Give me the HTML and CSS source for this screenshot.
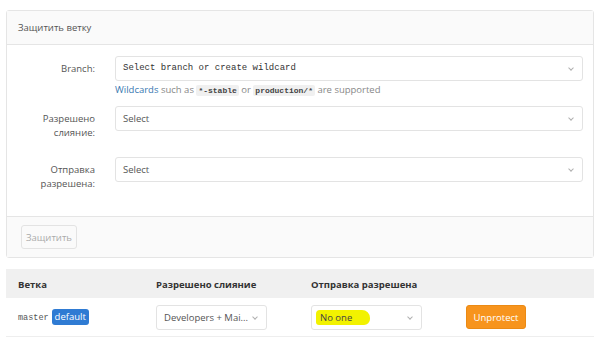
FILE: index.html
```html
<!DOCTYPE html>
<html lang="ru">
<head>
    <meta charset="UTF-8">
    <title>Защитить ветку</title>
    <link rel="stylesheet" href="styles.css">
</head>
<body>

    <div class="panel">
        <div class="panel-heading">Защитить ветку</div>

        <div class="panel-body">
            <div class="form-group first">
                <label class="form-label">Branch:</label>
                <div class="form-field">
                    <div class="select mono">Select branch or create wildcard<span class="caret"></span></div>
                    <div class="help">
                        <a class="link">Wildcards</a> such as <code>*-stable</code> or <code>production/*</code> are supported
                    </div>
                </div>
            </div>

            <div class="form-group">
                <label class="form-label">Разрешено<br>слияние:</label>
                <div class="form-field">
                    <div class="select">Select<span class="caret"></span></div>
                </div>
            </div>

            <div class="form-group">
                <label class="form-label">Отправка<br>разрешена:</label>
                <div class="form-field">
                    <div class="select">Select<span class="caret"></span></div>
                </div>
            </div>
        </div>

        <div class="panel-footer">
            <button type="button" class="btn-disabled">Защитить</button>
        </div>
    </div>

    <div class="table">
        <div class="table-row table-head">
            <div>Ветка</div>
            <div>Разрешено слияние</div>
            <div>Отправка разрешена</div>
            <div></div>
        </div>
        <div class="table-row">
            <div><span class="ref">master</span><span class="badge">default</span></div>
            <div><div class="select small">Developers + Mai...<span class="caret"></span></div></div>
            <div><div class="select small"><span class="marker">No one</span><span class="caret"></span></div></div>
            <div><button type="button" class="btn-warning">Unprotect</button></div>
        </div>
    </div>

</body>
</html>
```

FILE: styles.css
```css
body {
    font-family: 'Open Sans', sans-serif;
    font-size: 9.5px;
    margin: 0;
    padding: 10px 6px 0;
    background-color: #fff;
    color: #555;
}
.panel {
    border: 1px solid #e5e5e5;
    border-radius: 3px;
}
.panel-heading {
    background-color: #fafafa;
    border-bottom: 1px solid #e5e5e5;
    height: 33px;
    line-height: 33px;
    padding-left: 11px;
}
.panel-body {
    padding: 11px 10px 0 0;
    height: 160px;
}
.form-group {
    display: flex;
    gap: 20px;
    margin-bottom: 17px;
}
.form-group.first {
    margin-bottom: 8px;
}
.form-label {
    width: 88px;
    text-align: right;
    line-height: 14px;
    padding-top: 6px;
}
.form-field {
    flex: 1;
}
.select {
    position: relative;
    height: 23px;
    line-height: 23px;
    border: 1px solid #e3e3e3;
    border-radius: 3px;
    padding-left: 7px;
    color: #555;
    background-color: #fff;
}
.mono {
    font-family: 'Liberation Mono', monospace;
    font-size: 9px;
    color: #333;
}
.caret {
    position: absolute;
    right: 9px;
    top: 9px;
    width: 3px;
    height: 3px;
    border-right: 1px solid #b0b0b0;
    border-bottom: 1px solid #b0b0b0;
    transform: rotate(45deg);
}
.help {
    margin-top: 2px;
    color: #888;
    line-height: 14px;
}
.link {
    color: #3777b0;
}
code {
    font-family: 'Liberation Mono', monospace;
    font-size: 8px;
    font-weight: bold;
    color: #444;
    background-color: #f0f0f0;
    border-radius: 2px;
    padding: 1px 2px;
}
.panel-footer {
    background-color: #fafafa;
    border-top: 1px solid #e5e5e5;
    padding: 8px 14px;
    height: 24px;
}
button {
    font-family: 'Open Sans', sans-serif;
    font-size: 9.5px;
    height: 24px;
    border-radius: 3px;
    padding: 0 7px;
    cursor: pointer;
}
.btn-disabled {
    background-color: #fafafa;
    border: 1px solid #e3e3e3;
    color: #aaa;
    padding: 0 4px;
}
.btn-warning {
    background-color: #f7941d;
    border: 1px solid #eb8a14;
    color: #fff;
    width: 60px;
    padding: 0;
}
.table {
    margin-top: 11px;
}
.table-row {
    display: grid;
    grid-template-columns: 138px 155px 155px 1fr;
    padding-left: 12px;
    align-items: center;
    border-bottom: 1px solid #eee;
    height: 38px;
}
.table-head {
    background-color: #f0f0f0;
    font-weight: bold;
    color: #333;
    height: 29px;
    padding-top: 2px;
    box-sizing: border-box;
    border-bottom: none;
}
.ref {
    font-family: 'Liberation Mono', monospace;
    font-size: 8.5px;
    color: #555;
    margin-right: 3px;
}
.badge {
    display: inline-block;
    background-color: #2f7bd3;
    color: #fff;
    border-radius: 3px;
    padding: 0 3px;
    line-height: 16px;
}
.select.small {
    width: 102px;
    font-size: 9.5px;
}
.marker {
    background-color: #f2f200;
    border-radius: 4px 8px 6px 3px;
    padding: 1px 18px 1px 4px;
    margin-left: -3px;
    color: #444;
}
```
